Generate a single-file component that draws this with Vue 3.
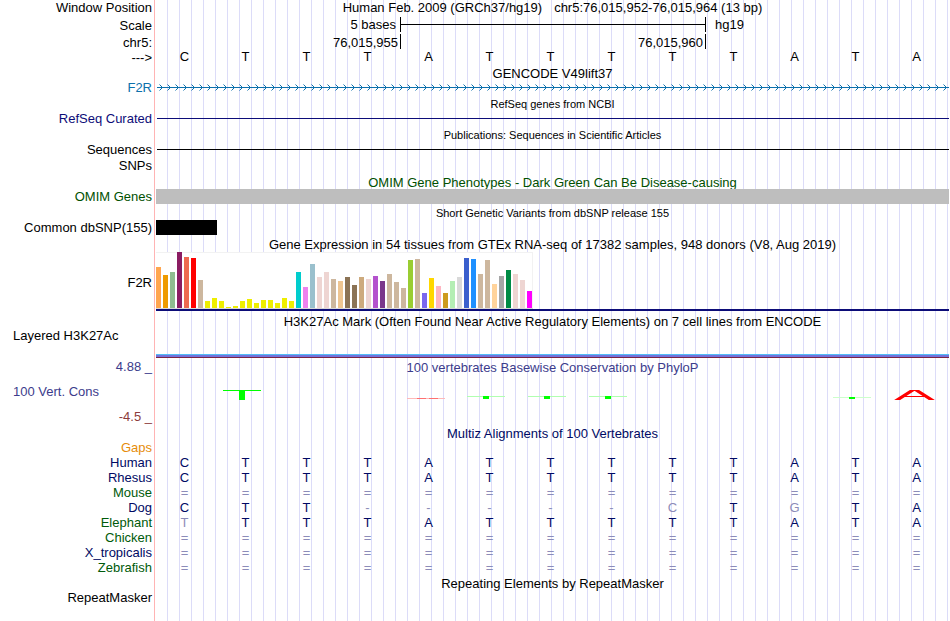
<script setup>
const reference = 'CTTTATTTTTATA'.split('')

const species = [
  { name: 'Human', tone: 'navy', bases: 'CTTTATTTTTATA', faded: [] },
  { name: 'Rhesus', tone: 'navy', bases: 'CTTTATTTTTATA', faded: [] },
  { name: 'Mouse', tone: 'green', bases: '=============', faded: [] },
  { name: 'Dog', tone: 'navy', bases: 'CTT-----CTGTA', faded: [8, 10] },
  { name: 'Elephant', tone: 'green', bases: 'TTTTATTTTTATA', faded: [0] },
  { name: 'Chicken', tone: 'green', bases: '=============', faded: [] },
  { name: 'X_tropicalis', tone: 'navy', bases: '=============', faded: [] },
  { name: 'Zebrafish', tone: 'green', bases: '=============', faded: [] },
]

const isFaded = (s, base, i) => base === '=' || base === '-' || s.faded.includes(i)

// Median expression per tissue: [bar height, tissue colour]
const tissues = [
  [41, '#ffa54f'], [33, '#ee9a00'], [36, '#8fbc8f'], [56, '#8b1c62'], [51, '#ee6a50'],
  [50, '#ff0000'], [28, '#cdb79e'], [7, '#eeee00'], [10, '#eeee00'], [7, '#eeee00'],
  [1, '#eeee00'], [2, '#eeee00'], [7, '#eeee00'], [9, '#eeee00'], [5, '#eeee00'],
  [8, '#eeee00'], [8, '#eeee00'], [5, '#eeee00'], [10, '#eeee00'], [7, '#eeee00'],
  [36, '#00cdcd'], [21, '#ee82ee'], [44, '#9ac0cd'], [31, '#eed5d2'], [36, '#eed5d2'],
  [29, '#cdb79e'], [27, '#eec591'], [31, '#8b7355'], [23, '#8b7355'], [31, '#cdaa7d'],
  [29, '#eed5d2'], [32, '#b452cd'], [27, '#7a378b'], [34, '#cdb79e'], [26, '#cdb79e'],
  [20, '#cdb79e'], [48, '#9acd32'], [49, '#cdb79e'], [15, '#7a67ee'], [30, '#ffd700'],
  [22, '#ffb6c1'], [15, '#cd9b1d'], [27, '#b4eeb4'], [31, '#d9d9d9'], [50, '#3a5fcd'],
  [49, '#1e90ff'], [34, '#cdb79e'], [48, '#cdb79e'], [24, '#ffd39b'], [32, '#a6a6a6'],
  [38, '#008b45'], [34, '#eed5d2'], [28, '#eed5d2'], [17, '#ff00ff'],
]

// Conservation marks, one slot per base; top is the offset inside the 12px mark
const marks = [
  null,
  { kind: 'stem', top: 1, height: 10, cap: '#00ff00' },
  null,
  null,
  { kind: 'flat' },
  { kind: 'stem', top: 7, height: 3, cap: '#b0ffb0' },
  { kind: 'stem', top: 7, height: 3, cap: '#b0ffb0' },
  { kind: 'stem', top: 7, height: 3, cap: '#b0ffb0' },
  null,
  null,
  null,
  { kind: 'stem', top: 8, height: 2, cap: '#ccffcc' },
  { kind: 'peak' },
]
</script>

<template>
  <main class="browser">
    <div class="row position">
      <div class="label">Window Position</div>
      <div class="lane heading">
        <span>Human Feb. 2009 (GRCh37/hg19)</span>
        <span>chr5:76,015,952-76,015,964 (13 bp)</span>
      </div>
    </div>

    <div class="row scale">
      <div class="label">Scale</div>
      <div class="lane columns">
        <span class="scale-text">5 bases</span>
        <span class="scale-bar"></span>
        <span class="assembly">hg19</span>
      </div>
    </div>

    <div class="row coords">
      <div class="label">chr5:</div>
      <div class="lane columns">
        <span class="coord first">76,015,955</span>
        <span class="coord second">76,015,960</span>
        <span class="coord-end"></span>
      </div>
    </div>

    <div class="row">
      <div class="label direction">---&gt;</div>
      <div class="bases">
        <span v-for="(b, i) in reference" :key="i">{{ b }}</span>
      </div>
    </div>

    <h2 class="title">GENCODE V49lift37</h2>
    <div class="row">
      <div class="label blue">F2R</div>
      <div class="lane">
        <svg class="strand" width="100%" height="15" aria-hidden="true">
          <defs>
            <pattern id="chevrons" x="0" y="0" width="8" height="15" patternUnits="userSpaceOnUse">
              <path d="M3.5 4.5 L6.5 7.5 L3.5 10.5" fill="none" stroke="#0c70ac" stroke-width="1" />
            </pattern>
          </defs>
          <rect x="1" y="7" width="100%" height="1" fill="#0c70ac" />
          <rect x="1" y="0" width="100%" height="15" fill="url(#chevrons)" />
        </svg>
      </div>
    </div>

    <h2 class="title small">RefSeq genes from NCBI</h2>
    <div class="row">
      <div class="label indigo">RefSeq Curated</div>
      <div class="lane"><div class="line indigo-line"></div></div>
    </div>

    <h2 class="title small">Publications: Sequences in Scientific Articles</h2>
    <div class="row">
      <div class="label">Sequences</div>
      <div class="lane"><div class="line"></div></div>
    </div>
    <div class="row snps">
      <div class="label">SNPs</div>
    </div>

    <h2 class="title omim">OMIM Gene Phenotypes - Dark Green Can Be Disease-causing</h2>
    <div class="row">
      <div class="label omim">OMIM Genes</div>
      <div class="lane block-gray"></div>
    </div>

    <h2 class="title small">Short Genetic Variants from dbSNP release 155</h2>
    <div class="row">
      <div class="label">Common dbSNP(155)</div>
      <div class="lane columns"><span class="variant"></span></div>
    </div>

    <h2 class="title expression-title">Gene Expression in 54 tissues from GTEx RNA-seq of 17382 samples, 948 donors (V8, Aug 2019)</h2>
    <div class="row expression">
      <div class="label">F2R</div>
      <div class="lane gene-model">
        <div class="chart">
          <span
            v-for="(t, i) in tissues"
            :key="i"
            class="bar"
            :style="{ height: t[0] + 'px', backgroundColor: t[1] }"
          ></span>
        </div>
      </div>
    </div>

    <h2 class="title">H3K27Ac Mark (Often Found Near Active Regulatory Elements) on 7 cell lines from ENCODE</h2>
    <div class="row histone">
      <div class="label start">Layered H3K27Ac</div>
      <div class="lane signal"></div>
    </div>

    <div class="row phylop-head">
      <div class="label violet">4.88 _</div>
      <h2 class="lane-title violet">100 vertebrates Basewise Conservation by PhyloP</h2>
    </div>
    <div class="row phylop">
      <div class="label start violet">100 Vert. Cons</div>
      <div class="bases marks">
        <span v-for="(m, i) in marks" :key="i" class="slot">
          <svg v-if="m" width="42" height="12" aria-hidden="true">
            <template v-if="m.kind === 'stem'">
              <rect x="0" :y="m.top" width="38" height="1" :fill="m.cap" />
              <rect x="16" :y="m.top" width="6" :height="m.height" fill="#00ff00" />
            </template>
            <template v-else-if="m.kind === 'flat'">
              <rect x="1" y="9" width="38" height="1" fill="#ffb8b8" />
              <rect x="11" y="9" width="9" height="1" fill="#ff7070" />
              <rect x="23" y="9" width="9" height="1" fill="#ff7070" />
            </template>
            <template v-else>
              <defs>
                <clipPath id="peak-clip"><rect x="0" y="1" width="42" height="10" /></clipPath>
              </defs>
              <g clip-path="url(#peak-clip)">
                <path d="M0 13 L20.5 0 L41 13" fill="none" stroke="#ff0000" stroke-width="3.2" />
                <rect x="11" y="7" width="19" height="1" fill="#ff0000" />
              </g>
            </template>
          </svg>
        </span>
      </div>
    </div>
    <div class="row">
      <div class="label maroon">-4.5 _</div>
    </div>

    <h2 class="title navy">Multiz Alignments of 100 Vertebrates</h2>
    <div class="row">
      <div class="label orange">Gaps</div>
    </div>
    <div class="alignment">
      <table>
        <tbody>
          <tr v-for="s in species" :key="s.name">
            <th scope="row" :class="s.tone">{{ s.name }}</th>
            <td
              v-for="(b, i) in s.bases"
              :key="i"
              :class="{ faded: isFaded(s, b, i), missing: b === '=' }"
            >{{ b }}</td>
          </tr>
        </tbody>
      </table>
    </div>

    <h2 class="title compact">Repeating Elements by RepeatMasker</h2>
    <div class="row">
      <div class="label">RepeatMasker</div>
    </div>
  </main>
</template>

<style>
body {
  margin: 0;
  background: #fff;
}
</style>

<style scoped>
.browser {
  min-height: 100vh;
  box-sizing: border-box;
  font-family: "Liberation Sans", Arial, Helvetica, sans-serif;
  font-size: 13px;
  line-height: 15px;
  color: #000;
  background-image:
    linear-gradient(#ffb4b4, #ffb4b4),
    repeating-linear-gradient(to right, transparent 0 11px, #dcdcf8 11px 12px);
  background-position: 154px 0, 156px 0;
  background-size: 1px 100%, 100% 100%;
  background-repeat: no-repeat;
}

.row {
  display: grid;
  grid-template-columns: 154px minmax(0, 1fr);
  min-height: 15px;
  padding-right: 1px;
}

.label {
  padding-right: 2px;
  text-align: right;
  white-space: nowrap;
}

.label.start {
  padding-left: 13px;
  text-align: left;
}

.lane {
  margin-left: 2px;
}

.columns {
  display: grid;
  grid-template-columns: repeat(13, minmax(0, 1fr));
}

.bases {
  display: grid;
  grid-template-columns: repeat(13, minmax(0, 1fr));
  padding-right: 2px;
  text-align: center;
}

.title,
.lane-title {
  margin: 0;
  padding-top: 2px;
  font-size: 13px;
  font-weight: 400;
  line-height: 15px;
  text-align: center;
  white-space: nowrap;
}

.title {
  height: 14px;
  padding-left: 156px;
  padding-right: 1px;
}

.title.small {
  font-size: 11px;
  line-height: 14px;
}

.title.compact {
  height: 13px;
  line-height: 14px;
}

.lane-title {
  height: 14px;
  margin-left: 2px;
}

.position,
.scale {
  min-height: 17px;
}

.heading {
  display: flex;
  justify-content: center;
  gap: 12px;
  white-space: nowrap;
}

.scale .label {
  padding-top: 1px;
}

.direction {
  line-height: 17px;
  height: 15px;
}

.scale-text {
  grid-column: 1 / 5;
  padding-right: 4px;
  text-align: right;
}

.scale-bar {
  grid-column: 5 / 10;
  height: 15px;
  margin-right: -1px;
  border: solid #000;
  border-width: 0 1px;
  background: linear-gradient(#000, #000) 0 7px / 100% 1px no-repeat;
}

.assembly {
  grid-column: 10 / 14;
  padding-left: 10px;
}

.coords {
  height: 15px;
  line-height: 17px;
}

.coord,
.coord-end {
  height: 15px;
}

.coord {
  padding-right: 2px;
  text-align: right;
}

.coord.first {
  grid-column: 1 / 5;
}

.coord.second {
  grid-column: 5 / 10;
  border-left: 1px solid #000;
}

.coord-end {
  grid-column: 10 / 14;
  border-left: 1px solid #000;
}

.strand {
  display: block;
}

.line {
  height: 1px;
  margin: 7px 0 7px 1px;
  background: #000;
}

.indigo-line {
  background: #0c0c78;
}

.snps {
  min-height: 16px;
}

.snps .label {
  padding-top: 1px;
}

.block-gray {
  background: #bebebe;
}

.variant {
  grid-column: 1 / 2;
  background: #000;
}

.expression {
  margin-bottom: 1px;
}

.expression .label {
  align-self: center;
  padding-top: 2px;
}

.expression-title {
  padding-bottom: 1px;
}

.gene-model {
  border-bottom: 2px solid #0c0c78;
}

.chart {
  display: flex;
  align-items: flex-end;
  gap: 2px;
  width: max-content;
  height: 56px;
  padding-right: 1px;
  border-bottom: 1px solid #d8d8d8;
  background: #fff;
  box-shadow: inset 0 1px #f2f2f2, inset -1px 0 #f2f2f2;
}

.bar {
  width: 5px;
}

.histone {
  min-height: 30px;
}

.signal {
  background: linear-gradient(#55bdf5 0 1px, #7373dc 1px 3px, #7c2442 3px 4px) bottom / 100% 4px no-repeat;
}

.phylop-head {
  min-height: 16px;
}

.phylop-head .label {
  padding-top: 1px;
}

.phylop {
  min-height: 35px;
}

.phylop .label {
  padding-top: 10px;
}

.marks {
  padding-top: 15px;
  height: 12px;
}

.slot {
  padding-left: 8px;
  text-align: left;
}

.slot svg {
  display: block;
}

.alignment {
  padding-right: 3px;
}

.alignment table {
  width: 100%;
  table-layout: fixed;
  border-collapse: collapse;
}

.alignment tr {
  height: 15px;
}

.alignment th {
  width: 152px;
  padding: 0 2px 0 0;
  font-weight: 400;
  text-align: right;
}

.alignment td {
  padding: 0;
  color: #000a64;
  text-align: center;
}

.alignment .faded {
  color: #8c8cb9;
}

.alignment .missing {
  padding-top: 1px;
  line-height: 14px;
  vertical-align: bottom;
}

.blue { color: #0c70ac; }
.indigo { color: #0c0c78; }
.omim { color: #005000; }
.violet { color: #3c3c8c; }
.maroon { color: #8c3c3c; }
.orange { color: #e68c0a; }
.navy { color: #000a64; }
.green { color: #005a0a; }
</style>
